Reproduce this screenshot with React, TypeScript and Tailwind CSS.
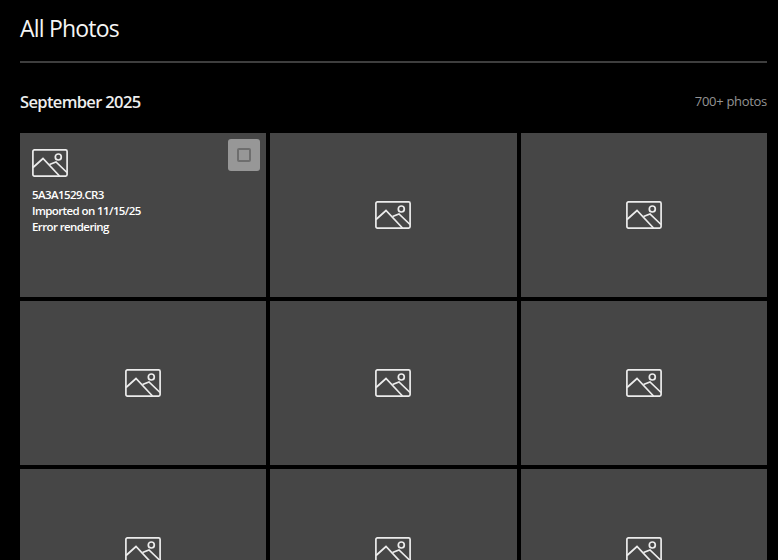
const cells = Array.from({ length: 9 }, (_, i) => i);

function ImageIcon() {
  return (
    <svg width="36" height="28" viewBox="0 0 36 28" fill="none" stroke="#ececec" strokeWidth="1.7">
      <rect x="0.9" y="0.9" width="34.2" height="26.2" rx="1.5" />
      <path d="M1 18.5 L11 9.5 L27.5 27" />
      <path d="M17.5 15.5 L24 13 L35 23.5" />
      <circle cx="26.3" cy="8" r="3" />
    </svg>
  );
}

function PhotoCell({ index }: { index: number }) {
  if (index === 0) {
    return (
      <div className="relative h-[164px] bg-[#464646] px-3 pt-4">
        <ImageIcon />
        <div className="mt-[10px] text-[11.5px] leading-4 font-semibold tracking-[-0.6px] text-white">
          <p>5A3A1529.CR3</p>
          <p>Imported on 11/15/25</p>
          <p>Error rendering</p>
        </div>
        <div className="absolute top-[6px] right-[6px] flex h-8 w-8 items-center justify-center rounded-[3px] bg-[#979797]">
          <div className="h-[14px] w-[14px] rounded-[2px] border-2 border-[#6e6e6e]" />
        </div>
      </div>
    );
  }
  return (
    <div className="flex h-[164px] items-center justify-center bg-[#464646]">
      <ImageIcon />
    </div>
  );
}

export default function App() {
  return (
    <div className="h-[560px] overflow-hidden bg-black pr-[11px] pl-5 font-['Open_Sans','Noto_Sans',sans-serif] text-white">
      <h1 className="pt-[12px] text-[23px] leading-8 tracking-[-0.8px] text-[#f5f5f5]">All Photos</h1>
      <div className="mt-[17px] h-[2px] bg-[#3e3e3e]" />
      <div className="mt-[27px] flex items-center justify-between">
        <h2 className="text-[16.5px] leading-6 font-semibold tracking-[-0.65px] text-[#eeeeee]">September 2025</h2>
        <span className="-translate-y-px text-[13px] leading-5 tracking-[-0.3px] text-[#949494]">700+ photos</span>
      </div>
      <div className="mt-[19px] grid grid-cols-3 gap-1">
        {cells.map((i) => (
          <PhotoCell key={i} index={i} />
        ))}
      </div>
    </div>
  );
}
